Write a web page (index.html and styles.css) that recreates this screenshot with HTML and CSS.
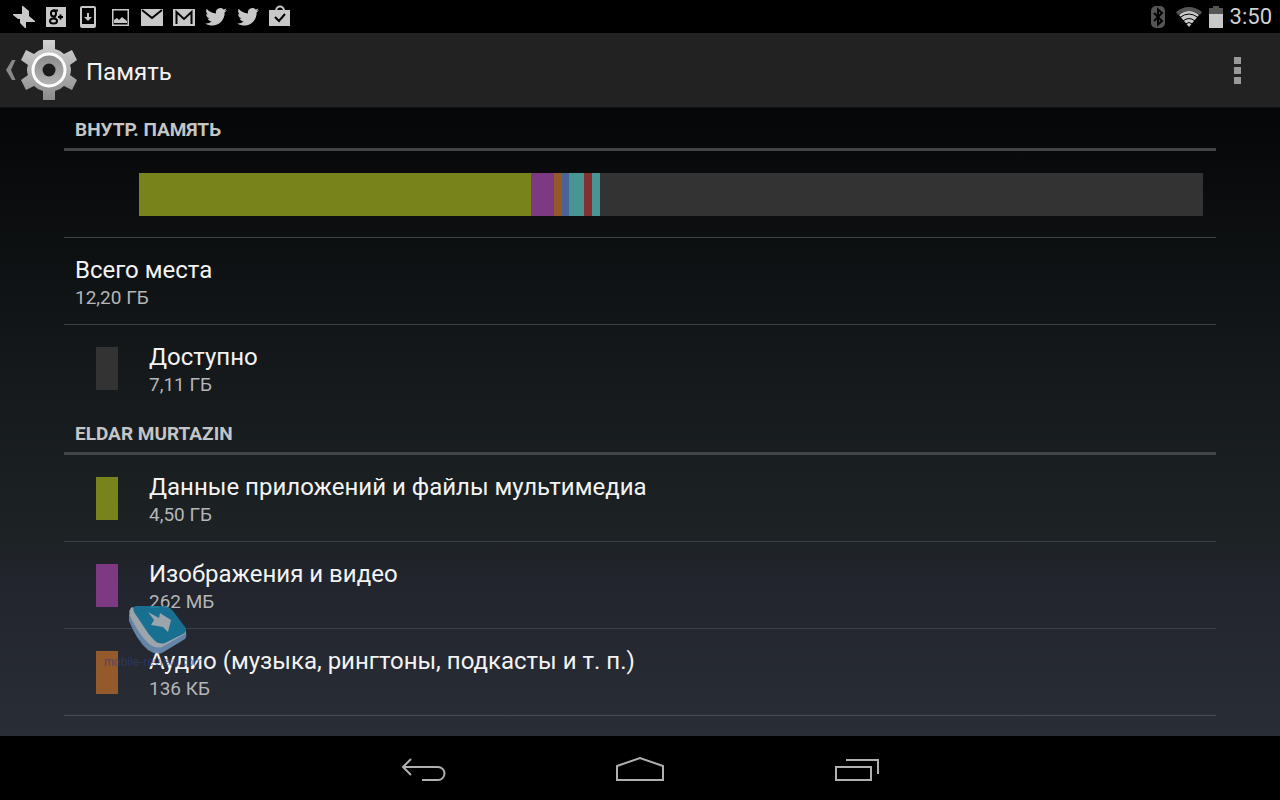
FILE: index.html
```html
<!DOCTYPE html>
<html lang="ru">
<head>
    <meta charset="UTF-8">
    <title>Память</title>
    <link rel="stylesheet" href="styles.css">
</head>
<body>
<div class="status-bar">
    <div class="notifications">
        <svg viewBox="0 0 24 24"><path d="M10 12V1h1l6 5v6zM12 11h5l6 5v1H12zM14 12v11h-1l-5-5v-6zM12 14H6l-5-4V9h11z"/></svg>
        <svg viewBox="0 0 24 24"><path d="M2 2h20v20H2z"/><ellipse class="ink" cx="9.500" cy="8.500" rx="2.500" ry="3"/><ellipse class="ink" cx="9.500" cy="16" rx="3.500" ry="2.500"/><path class="ink" d="M9 5.500h5M11 11l-1 3M14 12h5M16.500 9.500v5"/></svg>
        <svg viewBox="0 0 24 24"><path fill-rule="evenodd" d="M6 1h12q2 0 2 2v18q0 2-2 2H6q-2 0-2-2V3q0-2 2-2zM6 3v16h12V3z"/><path d="M11 8h2v4h3l-4 4-4-4h3z"/></svg>
        <svg viewBox="0 0 24 24"><path fill-rule="evenodd" d="M4 4h17v17H4zM5.500 5.500v14h14v-14z"/><path d="M6 18v-3l3-2 2 2 3-3 5 4v2z"/></svg>
        <svg viewBox="0 0 24 24"><path d="M1 4h22v17H1z"/><path class="ink" d="M2 5l10 8 10-8"/></svg>
        <svg viewBox="0 0 24 24"><path d="M1 4h22v17H1z"/><path class="ink" d="M4.500 19V7l7.500 7 7.500-7v12"/></svg>
        <svg viewBox="0 0 24 24"><path d="M23 5c-.8.400-1.700.600-2.500.7.900-.6 1.500-1.400 1.900-2.300-.9.500-1.800.8-2.800 1A4.500 4.500 0 0 0 12 8.500C8.200 8.300 5 6.500 2.700 3.700c-1.200 2.200-.5 4.500 1.400 5.900-.7 0-1.400-.2-2-.5 0 2.200 1.600 4 3.500 4.400-.6.200-1.300.2-2 .1.600 1.700 2.100 2.900 4.100 3-1.900 1.500-4.200 2.200-6.500 1.900 8.800 5.300 19.500 0 19.500-11.200.9-.6 1.700-1.400 2.300-2.300z"/></svg>
        <svg viewBox="0 0 24 24"><path d="M23 5c-.8.400-1.700.600-2.500.7.900-.6 1.500-1.400 1.900-2.300-.9.500-1.800.8-2.800 1A4.500 4.500 0 0 0 12 8.500C8.200 8.300 5 6.500 2.700 3.700c-1.200 2.200-.5 4.500 1.400 5.900-.7 0-1.400-.2-2-.5 0 2.200 1.600 4 3.500 4.400-.6.200-1.300.2-2 .1.600 1.700 2.100 2.900 4.100 3-1.900 1.500-4.200 2.200-6.500 1.900 8.800 5.300 19.500 0 19.500-11.200.9-.6 1.700-1.400 2.300-2.300z"/></svg>
        <svg viewBox="0 0 24 24"><path d="M1 5h21v16H1z"/><path class="handle" d="M8 6c0-6 8-6 8 0"/><path class="ink" d="M7 12l4 4 6-7"/></svg>
    </div>
    <div class="system">
        <svg class="bluetooth" width="14" height="22" viewBox="0 0 14 22"><rect width="14" height="22" rx="5"/><path d="M3 7l8 8-4 3.500v-15L11 7l-8 8"/></svg>
        <svg width="26" height="20" viewBox="0 0 26 20"><path class="dim" d="M0 5Q13-5 26 5l-2 3Q13 0 2 8z"/><path d="M3 8Q13 0 23 8L13 20z"/><path class="wave" d="M4 10.500q9-7 18 0M7 14q6-5 12 0M9.500 17q3.500-3 7 0"/></svg>
        <svg width="14" height="22" viewBox="0 0 14 22"><path class="dim" d="M0 2h4V0h6v2h4v6H0z"/><path d="M0 8h14v14H0z"/></svg>
        <span class="clock">3:50</span>
    </div>
</div>

<div class="action-bar">
    <button class="up" type="button" aria-label="Назад к настройкам">
        <svg width="10" height="20" viewBox="0 0 10 20"><path d="M6 0h3.500L5 10l4.500 10H6L0 10z"/></svg>
        <svg width="58" height="60" viewBox="0 0 58 60">
            <defs>
                <linearGradient id="metal" x1="0" y1="0" x2="0" y2="1">
                    <stop offset="0" stop-color="#d2d2d2"/>
                    <stop offset="1" stop-color="#8c8c8c"/>
                </linearGradient>
                <linearGradient id="disc" x1="0" y1="0" x2="0" y2="1">
                    <stop offset="0" stop-color="#8a8a8a"/>
                    <stop offset="1" stop-color="#b5b5b5"/>
                </linearGradient>
            </defs>
            <path fill="url(#metal)" d="M23 0h12v9q5 1 9 5l8-4 5 10-7 5q2 5 0 10l7 5-5 10-8-4q-4 4-9 5v9H23v-9q-5-1-9-5l-8 4-5-10 7-5q-2-5 0-10l-7-5L6 10l8 4q4-4 9-5z"/>
            <circle cx="29" cy="30" r="16" fill="url(#disc)" stroke="#fff" stroke-width="3"/>
            <circle cx="29" cy="30" r="6.500" fill="#1c1c1c"/>
        </svg>
    </button>
    <h1>Память</h1>
    <button class="overflow" type="button" aria-label="Меню">
        <svg width="7" height="27" viewBox="0 0 7 27"><path d="M0 0h7v7H0zM0 10h7v7H0zM0 20h7v7H0z"/></svg>
    </button>
</div>

<main class="storage">
    <h2>ВНУТР. ПАМЯТЬ</h2>
    <ul>
        <li class="usage">
            <div class="usage-bar">
                <span class="apps" style="flex-grow: 392"></span>
                <span class="images" style="flex-grow: 23"></span>
                <span class="audio" style="flex-grow: 8"></span>
                <span class="downloads" style="flex-grow: 7"></span>
                <span class="cache" style="flex-grow: 15"></span>
                <span class="misc" style="flex-grow: 8"></span>
                <span class="cache" style="flex-grow: 8"></span>
                <span class="free" style="flex-grow: 603"></span>
            </div>
        </li>
        <li>
            <div class="text"><h3>Всего места</h3><p>12,20 ГБ</p></div>
        </li>
        <li>
            <span class="swatch free"></span>
            <div class="text"><h3>Доступно</h3><p>7,11 ГБ</p></div>
        </li>
    </ul>
    <h2>ELDAR MURTAZIN</h2>
    <ul class="user">
        <li>
            <span class="swatch apps"></span>
            <div class="text"><h3>Данные приложений и файлы мультимедиа</h3><p>4,50 ГБ</p></div>
        </li>
        <li>
            <span class="swatch images"></span>
            <div class="text"><h3>Изображения и видео</h3><p>262 МБ</p></div>
        </li>
        <li>
            <span class="swatch audio"></span>
            <div class="text"><h3>Аудио (музыка, рингтоны, подкасты и т. п.)</h3><p>136 КБ</p></div>
        </li>
    </ul>
    <div class="watermark">
        <svg width="60" height="48" viewBox="0 0 60 48">
            <path fill="#6b8fb5" d="M1 8v7q8 20 19 29 7 5 14 3l23-14q2-2 1-7z"/>
            <path fill="#a9b2ba" d="M4 1Q0 4 2 10q8 17 18 27 7 6 14 4l21-12q5-3 2-7z"/>
            <path fill="#17789c" d="M8 0h29q5 1 8 5l12 16q3 4-2 7L37 37q-6 2-11-3-6-6-10-13L6 6Q4 1 8 0z"/>
            <path fill="#a9b2ba" d="M20 6l11 6 1-5 11 7-3 12-5-5-12-2 3-5z"/>
        </svg>
        <span>mobile-review.com</span>
    </div>
</main>

<nav class="nav-bar">
    <button type="button" aria-label="Назад">
        <svg width="48" height="28" viewBox="0 0 48 28"><path d="M12 5L4 13l8 8M5 13h34a6 6 0 0 1 0 13H23"/></svg>
    </button>
    <button type="button" aria-label="Домой">
        <svg width="48" height="28" viewBox="0 0 48 28"><path d="M1 26V12l23-8 23 8v14z"/></svg>
    </button>
    <button type="button" aria-label="Недавние">
        <svg width="48" height="28" viewBox="0 0 48 28"><path d="M3 13h35v13H3zM13 6h32v14"/></svg>
    </button>
</nav>
</body>
</html>
```
FILE: styles.css
```css
*{
    margin: 0;
    padding: 0;
    box-sizing: border-box;
}
body{
    min-height: 100vh;
    display: flex;
    flex-direction: column;
    background-color: #000;
    color: #f3f3f3;
    font-family: Roboto, "Noto Sans", sans-serif;
}
ul{
    list-style: none;
}
svg{
    display: block;
    flex-shrink: 0;
}
button{
    display: flex;
    align-items: center;
    border: none;
    background: none;
    cursor: pointer;
}
h1,h3{
    font-size: 24px;
    font-weight: 400;
}

/* status bar */
.status-bar{
    display: flex;
    justify-content: space-between;
    align-items: center;
    height: 33px;
    padding: 0 8px 0 12px;
    fill: #c8c8c8;
}
.notifications{
    display: flex;
    gap: 8px;
}
.notifications svg{
    width: 24px;
    height: 24px;
}
.notifications .ink{
    fill: none;
    stroke: #000;
    stroke-width: 2;
}
.notifications .handle{
    fill: none;
    stroke: #c8c8c8;
    stroke-width: 2;
}
.system{
    display: flex;
    align-items: center;
    gap: 7px;
}
.system .dim{
    fill: #555;
}
.system .wave{
    fill: none;
    stroke: #000;
    stroke-width: 1;
}
.bluetooth{
    fill: #555;
    margin-right: 4px;
}
.bluetooth path{
    fill: none;
    stroke: #000;
    stroke-width: 2;
}
.clock{
    font-size: 22px;
    color: #d0d0d0;
}

/* action bar */
.action-bar{
    display: flex;
    align-items: center;
    height: 75px;
    padding: 0 6px;
    background-color: #222;
    border-bottom: 1px solid #111;
}
.action-bar h1{
    padding-top: 4px;
}
.up{
    gap: 4px;
    margin-right: 8px;
    fill: #888;
}
.overflow{
    margin-left: auto;
    padding: 10px 33px;
    fill: #999;
}

/* storage list */
.storage{
    flex: 1;
    position: relative;
    padding: 0 5%;
    background: linear-gradient(#050607, #14181a 40%, #1d2225 68%, #22252d 76%, #292d35);
}
.storage h2{
    height: 43px;
    padding-left: 11px;
    border-bottom: 3px solid #424446;
    font-size: 19px;
    font-weight: 700;
    line-height: 44px;
    color: #c4c5c6;
}
.storage li{
    display: flex;
    align-items: center;
    height: 87px;
    padding-left: 11px;
    border-bottom: 1px solid #3c3f43;
}
.storage li:last-child{
    border-bottom-color: transparent;
}
.storage .user li:last-child{
    border-bottom-color: #484b51;
}
.storage .usage{
    padding: 0 13px 0 75px;
}
.usage-bar{
    display: flex;
    flex: 1;
    height: 43px;
}
.usage-bar span{
    flex-basis: 0;
}
.swatch{
    width: 22px;
    height: 43px;
    margin: 0 31px 0 21px;
}
.apps{
    background-color: #78841b;
}
.images{
    background-color: #7d3a82;
}
.audio{
    background-color: #955a2b;
}
.downloads{
    background-color: #4a6498;
}
.cache{
    background-color: #489594;
}
.misc{
    background-color: #823031;
}
.free{
    background-color: #333;
}
.text{
    padding-top: 4px;
}
.text h3{
    line-height: 30px;
}
.text p{
    font-size: 19px;
    line-height: 26px;
    color: #b4b6b8;
}

/* logo lying over the list */
.watermark{
    position: absolute;
    left: 104px;
    bottom: 66px;
    color: #34407c;
    font-family: "Liberation Sans", sans-serif;
    font-size: 12px;
    line-height: 16px;
    opacity: 0.9;
}
.watermark svg{
    margin-left: 24px;
}
.watermark span{
    opacity: 0.7;
}

/* navigation bar */
.nav-bar{
    display: flex;
    justify-content: center;
    height: 64px;
}
.nav-bar button{
    justify-content: center;
    width: 217px;
}
.nav-bar path{
    fill: none;
    stroke: #b0b0b0;
    stroke-width: 2;
}
```
